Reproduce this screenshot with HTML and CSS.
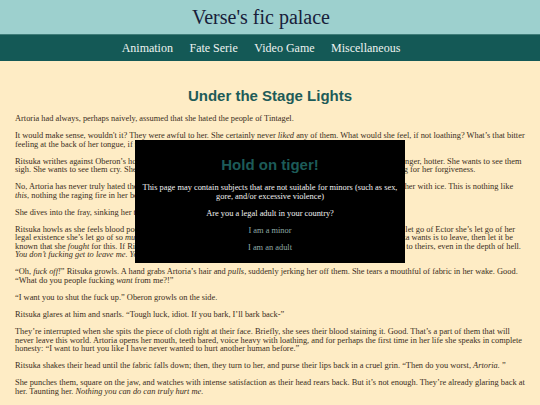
FILE: index.html
```html
<!DOCTYPE html>
<html lang="en">
<head>
<meta charset="utf-8">
<title>Under the Stage Lights – Verse's fic palace</title>
<link rel="stylesheet" href="styles.css">
</head>
<body>
<header class="masthead">
  <h1 class="site-title">Verse's fic palace</h1>
</header>
<nav class="site-nav">
  <a class="nav-link" href="#">Animation</a>
  <a class="nav-link" href="#">Fate Serie</a>
  <a class="nav-link" href="#">Video Game</a>
  <a class="nav-link" href="#">Miscellaneous</a>
</nav>
<main class="story">
  <h2 class="story-title">Under the Stage Lights</h2>
  <p>Artoria had always, perhaps naively, assumed that she hated the people of Tintagel.</p>
  <p>It would make sense, wouldn't it? They were awful to her. She certainly never <i>liked</i> any of them. What would she feel, if not loathing? What’s that bitter feeling at the back of her tongue, if not hatred?</p>
  <p>Ritsuka writhes against Oberon’s hold, burning, thrashing like a wild animal, and Artoria’s own fire only grows, stronger, hotter. She wants to see them sigh. She wants to see them cry. She wants to see them bleed, wants to see them on their knees, begging and pleading for her forgiveness.</p>
  <p>No, Artoria has never truly hated them. What she felt for them was cold, distant, a quiet disdain that only ever filled her with ice. This is nothing like <i>this</i>, nothing the raging fire in her belly could ever compare to.</p>
  <p>She dives into the fray, sinking her teeth into Ritsuka’s shoulder.</p>
  <p>Ritsuka howls as she feels blood pool in her mouth, hot and metallic. Good. If Ritsuka thinks that just because she’s let go of Ector she’s let go of her legal existence she’s let go of so <i>much</i> that the only thing left for her to do is to disappear right now, and if all Ritsuka wants is to leave, then let it be known that she <i>fought</i> for this. If Ritsuka is going to hell, then Artoria will drag herself down there too, her soul tied to theirs, even in the depth of hell. <i>You don’t fucking get to leave me. You don’t.</i></p>
  <p>“Oh, <i>fuck off!</i>” Ritsuka growls. A hand grabs Artoria’s hair and <i>pulls</i>, suddenly jerking her off them. She tears a mouthful of fabric in her wake. Good. “What do you people fucking <i>want</i> from me?!”</p>
  <p>“I want you to shut the fuck up.” Oberon growls on the side.</p>
  <p>Ritsuka glares at him and snarls. “Tough luck, idiot. If you bark, I’ll bark back-”</p>
  <p>They’re interrupted when she spits the piece of cloth right at their face. Briefly, she sees their blood staining it. Good. That’s a part of them that will never leave this world. Artoria opens her mouth, teeth bared, voice heavy with loathing, and for perhaps the first time in her life she speaks in complete honesty: “I want to hurt you like I have never wanted to hurt another human before.”</p>
  <p>Ritsuka shakes their head until the fabric falls down; then, they turn to her, and purse their lips back in a cruel grin. “Then do you worst, <i>Artoria.</i> ”</p>
  <p>She punches them, square on the jaw, and watches with intense satisfaction as their head rears back. But it’s not enough. They’re already glaring back at her. Taunting her. <i>Nothing you can do can truly hurt me.</i></p>
  <p>She’s not thinking. Her blood is boiling, steam rising in her head. She’s not thinking when she springs up. She’s not thinking when she lifts her shirt up and over her head.</p>
</main>
<div class="age-gate" role="dialog" aria-labelledby="gate-title">
  <h2 class="gate-title" id="gate-title">Hold on tiger!</h2>
  <p class="gate-text">This page may contain subjects that are not suitable for minors (such as sex, gore, and/or excessive violence)</p>
  <p class="gate-text">Are you a legal adult in your country?</p>
  <a class="gate-choice" href="#">I am a minor</a>
  <a class="gate-choice" href="#">I am an adult</a>
</div>
</body>
</html>
```
FILE: styles.css
```css
html, body {
  margin: 0;
  padding: 0;
}

body {
  background: #feecc5;
  color: #392d21;
  font-family: "Liberation Serif", "Times New Roman", serif;
  overflow: hidden;
}

.masthead {
  background: #9dd0ce;
  border-bottom: 1px solid #3f7d7a;
  height: 34px;
  padding-right: 18px;
  display: flex;
  align-items: center;
  justify-content: center;
}

.site-title {
  margin: 0;
  font-size: 20px;
  font-weight: normal;
  color: #18203a;
}

.site-nav {
  background: #145956;
  height: 26px;
  padding-right: 18px;
  display: flex;
  align-items: center;
  justify-content: center;
  gap: 16.5px;
}

.nav-link {
  color: #eef3f1;
  text-decoration: none;
  font-size: 12px;
}

.story {
  padding: 26px 15px 0;
}

.story-title {
  margin: 0 0 11px;
  text-align: center;
  font-family: "Liberation Sans", Arial, sans-serif;
  font-size: 15px;
  font-weight: bold;
  color: #1d5b58;
}

.story p {
  margin: 0 0 8.4px;
  font-size: 8.4px;
  line-height: 8.6px;
}

.age-gate {
  position: fixed;
  left: 135px;
  top: 140px;
  width: 270px;
  height: 123px;
  box-sizing: border-box;
  background: #000;
  padding: 16px 5px 0;
  display: flex;
  flex-direction: column;
  align-items: center;
  text-align: center;
}

.gate-title {
  margin: 0 0 11px;
  font-family: "Liberation Sans", Arial, sans-serif;
  font-size: 15px;
  font-weight: bold;
  color: #1d5b58;
}

.gate-text {
  margin: 0 0 8.4px;
  color: #f2f2f2;
  font-size: 8.4px;
  line-height: 8.6px;
}

.gate-choice {
  color: #8fa9a6;
  text-decoration: none;
  font-size: 8.4px;
  line-height: 8.6px;
  margin-bottom: 8.4px;
}
```
